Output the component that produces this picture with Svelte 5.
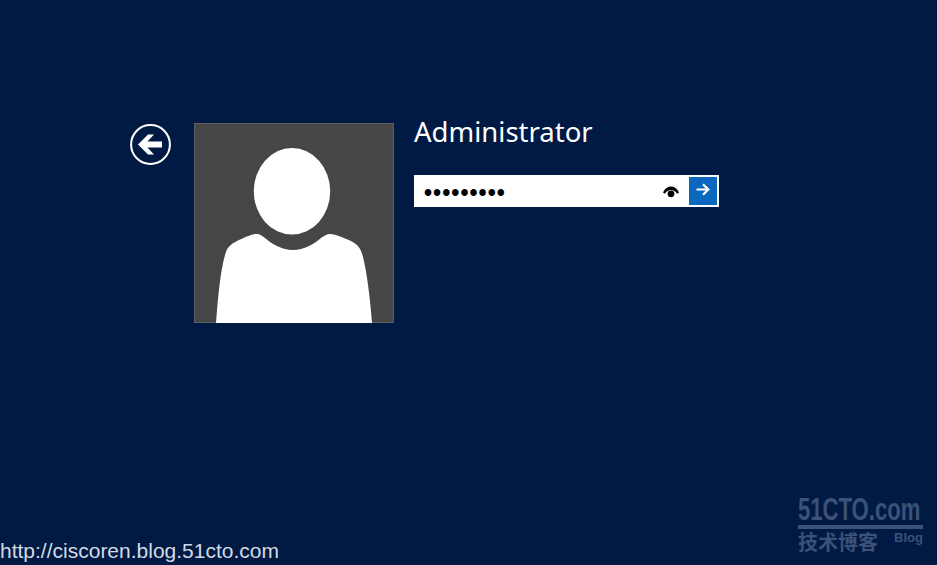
<script>
  const name = 'Administrator';
  const password = '•••••••••';
</script>

<main class="page">
  <section class="login">
    <button class="back" aria-label="Back">
      <svg width="41" height="41" viewBox="0 0 41 41" fill="none">
        <circle cx="20.5" cy="20.5" r="19.4" stroke="#fff" stroke-width="2" />
        <path d="M8 20.500 18 10.500H24L17.500 17.500H32V23.500H17.500L24 30.500H18Z" fill="#fff" />
      </svg>
    </button>
    <div class="avatar">
      <svg width="200" height="200" viewBox="0 0 200 200">
        <rect x=".5" y=".5" width="199" height="199" fill="#464646" stroke="#5a5e66" />
        <ellipse cx="98" cy="68.3" rx="38.2" ry="43.3" fill="#fff" />
        <path d="M22 200C24 175 26 150 31 132C33 124 37 121 43 118C50 115 57 111 63 111C66 111 68 113 71 115C78 121 88 127 99 127C110 127 120 121 127 115C130 113 133 111 136 111C142 111 150 115 157 118C163 121 167 125 169 134C173 150 176 175 178 200Z" fill="#fff" />
      </svg>
    </div>
    <div class="credentials">
      <h1>{name}</h1>
      <div class="field">
        <span class="dots">{password}</span>
        <svg class="eye" width="16" height="12" viewBox="0 0 16 12">
          <path d="M0 6.500C2 2.400 4.800.5 8 .5s6 1.900 8 6l-2 1.200C12.600 5.200 10.600 4 8 4S3.400 5.200 2 7.700Z" fill="#000" />
          <circle cx="8" cy="7.800" r="3.400" fill="#000" />
        </svg>
        <button class="submit" aria-label="Submit">
          <svg width="14" height="13" viewBox="0 0 14 13" fill="none" stroke="#fff" stroke-width="2.200">
            <path d="M.5 6.500H12M7 1.200l5.300 5.300L7 11.800" />
          </svg>
        </button>
      </div>
    </div>
  </section>

  <footer class="url">http://ciscoren.blog.51cto.com</footer>

  <aside class="mark">
    <div class="brand"><span>51CTO.com</span></div>
    <div class="sub"><span class="cn">技术博客</span><span class="blog">Blog</span></div>
  </aside>
</main>

<style>
  :global(body) {
    margin: 0;
    background: #001a44;
  }
  .page {
    position: relative;
    height: 565px;
    overflow: hidden;
    background: #001a44;
    display: flex;
    flex-direction: column;
    justify-content: space-between;
  }
  .login {
    display: flex;
    align-items: flex-start;
    padding: 123px 0 0 130px;
  }
  .back {
    width: 41px;
    height: 41px;
    margin: 1px 23px 0 0;
    padding: 0;
    border: 0;
    background: none;
    display: block;
  }
  .back svg, .avatar svg, .submit svg { display: block; }
  .avatar {
    width: 200px;
    height: 200px;
    overflow: hidden;
  }
  .credentials {
    margin-left: 20px;
  }
  h1 {
    margin: 0;
    font: 400 27.500px/18px "Noto Sans", sans-serif;
    color: #fff;
    height: 52px;
    white-space: nowrap;
  }
  .field {
    width: 305px;
    height: 32px;
    box-sizing: border-box;
    background: #fff;
    display: flex;
    align-items: center;
    padding: 2px;
  }
  .dots {
    flex: 1;
    padding: 4px 0 0 8px;
    font: 700 23px/1 "Liberation Sans", sans-serif;
    letter-spacing: 1.050px;
    color: #000;
    white-space: nowrap;
  }
  .eye {
    margin-right: 10px;
    margin-top: 2px;
  }
  .submit {
    width: 28px;
    height: 28px;
    padding: 0 0 3px 0;
    border: 0;
    background: #0a68bd;
    display: flex;
    align-items: center;
    justify-content: center;
  }
  .url {
    padding: 0 0 2px 0;
    font: 400 21px/24px "Liberation Sans", sans-serif;
    color: #d3dae3;
  }
  .mark {
    position: absolute;
    left: 798px;
    top: 494px;
    width: 125px;
    color: #3c5177;
  }
  .brand {
    height: 31px;
    border-bottom: 4px solid #3c5177;
    white-space: nowrap;
  }
  .brand span {
    display: block;
    width: max-content;
    font: 700 32px/30px "Liberation Sans", sans-serif;
    transform: scaleX(.69);
    transform-origin: left top;
  }
  .sub {
    display: flex;
    justify-content: space-between;
  }
  .cn {
    font: 700 20px/25px "Noto Sans CJK SC", sans-serif;
  }
  .blog {
    font: 700 13px/18px "Liberation Sans", sans-serif;
  }
</style>
